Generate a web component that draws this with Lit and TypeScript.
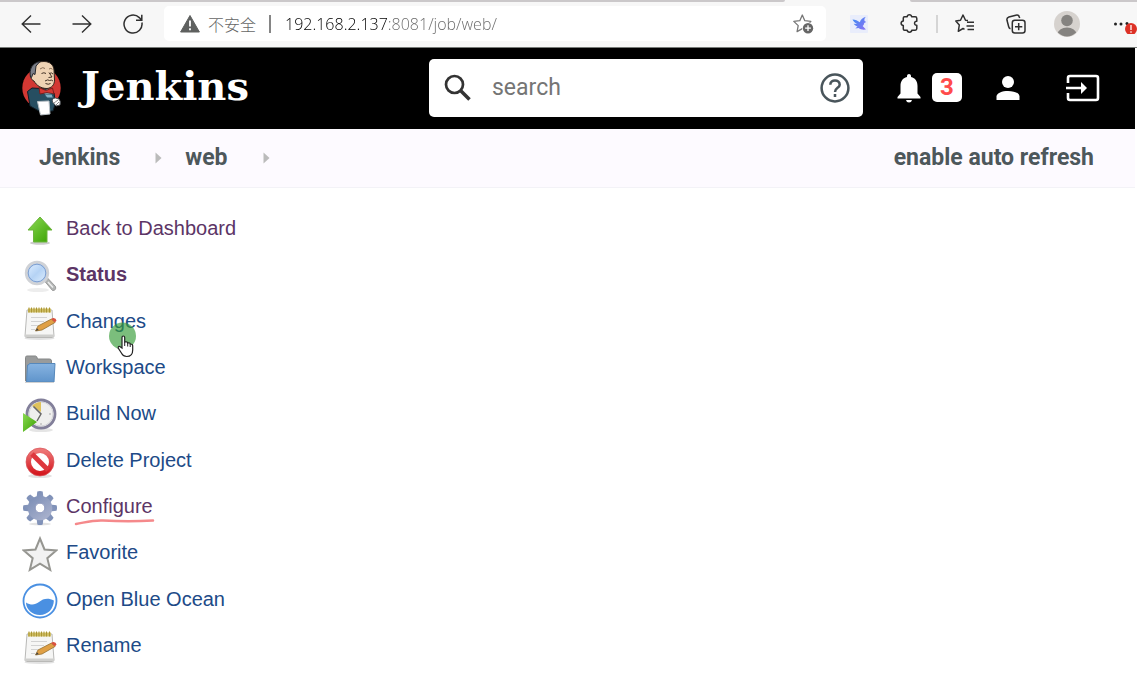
import { LitElement, html, svg, css } from "lit";
import { customElement, property } from "lit/decorators.js";
import { classMap } from "lit/directives/class-map.js";

const baseStyles = css`
  * { box-sizing: border-box; }
  svg { display: block; flex: none; }
  button { border: 0; padding: 0; margin: 0; background: none; color: inherit; font: inherit; cursor: pointer; }
  input { border: 0; padding: 0; margin: 0; outline: 0; min-width: 0; background: none; }
  a { text-decoration: none; }
`;

@customElement("browser-bar")
export class BrowserBar extends LitElement {
  static styles = [baseStyles, css`
    :host { display: block; background: #f7f7f7; border-bottom: 1px solid #777b78; }
    .tabs { display: flex; justify-content: space-between; height: 2px; }
    .tab { background: #cbc8ca; }
    .left { width: 69%; border-bottom-right-radius: 2px; }
    .right { width: 20%; border-bottom-left-radius: 2px; }
    .bar { display: flex; align-items: center; height: 45px; padding: 0 0 2px 5px; }
    .tool { display: flex; align-items: center; justify-content: center; flex: none; width: 51px; height: 34px; color: #303030; }
    .address { display: flex; align-items: center; flex: 1; height: 35px; margin: 0 7px 0 6px; padding: 0 12px 0 16px; border-radius: 5px; background: #fff; }
    .warn { font: 300 16px "Open Sans", "Noto Sans CJK SC", sans-serif; color: #666; margin-left: 8px; white-space: nowrap; }
    .rule { width: 2px; height: 18px; margin: 0 14px 0 13px; background: #858585; flex: none; }
    .url {
      flex: 1; height: 24px; font: 300 16px "Open Sans", sans-serif; color: transparent; caret-color: #222;
      background: linear-gradient(90deg, #000 103px, #666 103px);
      -webkit-background-clip: text; background-clip: text;
    }
    .sep { width: 2px; height: 18px; margin: 0 1px; background: #d5d5d5; flex: none; }
    .more { width: 45px; justify-content: flex-end; }
  `];
  render() {
    return html`
      <div class="tabs"><div class="tab left"></div><div class="tab right"></div></div>
      <div class="bar">
        <button class="tool" aria-label="Back"><svg width="20" height="20" viewBox="0 0 20 20" fill="none" stroke="currentColor" stroke-width="1.4"><path d="M19.5 10H1M10 1.5 1.2 10 10 18.5"/></svg></button>
        <button class="tool" aria-label="Forward"><svg width="20" height="20" viewBox="0 0 20 20" fill="none" stroke="currentColor" stroke-width="1.4"><path d="M.5 10H19M10 1.5 18.8 10 10 18.5"/></svg></button>
        <button class="tool" aria-label="Reload"><svg width="20" height="20" viewBox="0 0 20 20" fill="none" stroke="currentColor" stroke-width="1.5"><path d="M18.9 8.5A9 9 0 1 1 16.3 3.6L18.5 6M18.8.8V6.3H13"/></svg></button>
        <div class="address">
          <svg width="20" height="18" viewBox="0 0 20 18"><path d="M10 .5 19.4 17H.6Z" fill="#5e605f" stroke="#5e605f" stroke-linejoin="round"/><path d="M10 5.5v6M10 13.3v2" stroke="#fff" stroke-width="1.8"/></svg>
          <label class="warn" for="url">不安全</label>
          <span class="rule"></span>
          <input class="url" id="url" type="text" value="192.168.2.137:8081/job/web/">
          <button aria-label="Add to favorites"><svg width="21" height="20" viewBox="0 0 21 20"><path d="m9.3 1 2.5 5.7 6 .7-4.4 4 .9 6.2-5-3-5.2 3 1.1-6L.8 7.4l6-.7Z" fill="none" stroke="#777" stroke-width="1.3" stroke-linejoin="round"/><circle cx="15" cy="14.2" r="6" fill="#fff"/><circle cx="15" cy="14.2" r="5.2" fill="#666"/><path d="M15 11.3v5.8M12.1 14.2h5.8" stroke="#fff" stroke-width="1.3"/></svg></button>
        </div>
        <button class="tool" aria-label="Bird extension"><svg width="18" height="18" viewBox="0 0 18 18"><defs><linearGradient id="bird" x2="1" y2="1"><stop stop-color="#3a8df2"/><stop offset="1" stop-color="#8c72f5"/></linearGradient></defs><rect width="18" height="18" rx="1" fill="#e9edfb"/><path d="M2.500 4.500c2.700.3 5.300 1.100 7.300 2.700C10.500 4.700 12.300 2.800 15.800 1.800c-1.500 1.800-1.600 3-1.200 4.200l1.600.9-2 1.200c0 1.500-.8 2.300-1.600 3l3.400 3.400c-3.200.4-5.700-.1-7.400-1.600l-3.300.5 2.200-2C5.600 10.900 4.400 9.900 3.700 8.700l3.300.3C4.900 7.700 3.300 6.200 2.500 4.500Z" fill="url(#bird)"/></svg></button>
        <button class="tool" aria-label="Extensions"><svg width="19" height="19" viewBox="0 0 19 19" fill="none" stroke="currentColor" stroke-width="1.5" stroke-linejoin="round"><path d="M4.500 2.800H7.200C7.400.2 11.400.2 11.600 2.800H15.200Q16.800 2.800 16.800 4.400V7.200C13.800 6.900 13.800 11.500 16.800 11.200V14.600Q16.800 16.200 15.200 16.200H11.800C11.500 18.800 7.500 18.800 7.200 16.200H4.500Q3.300 16.200 3.300 15V11.600C.4 11.300.4 7.400 3.300 7.100V4Q3.300 2.800 4.500 2.800Z"/></svg></button>
        <span class="sep"></span>
        <button class="tool" aria-label="Favorites"><svg width="20" height="19" viewBox="0 0 20 19" fill="none" stroke="currentColor" stroke-width="1.5" stroke-linejoin="round"><path d="M13 6.500 10.500 6.300 8 1 5.500 6.300.8 7l3.500 4-1 6.300L8 14.500l1.500.9M12 8.300h7M11.500 12h7.500M12.500 15.500H19"/></svg></button>
        <button class="tool" aria-label="Collections"><svg width="20" height="20" viewBox="0 0 20 20" fill="none" stroke="currentColor" stroke-width="1.5"><rect x="6.300" y="6.300" width="12.700" height="12.700" rx="2.500"/><path d="M12.700 9v7.300M9 12.700h7.300M4.500 14.800C3.400 14.500 3 13.900 2.700 12.800L1 6.300C.6 4.500 1.200 3.500 2.900 3L9.800 1.200C11.600.7 12.800 1.200 13.300 3L13.700 4"/></svg></button>
        <button class="tool" aria-label="Profile"><svg width="26" height="26" viewBox="0 0 26 26"><defs><clipPath id="face"><circle cx="13" cy="13" r="12.500"/></clipPath></defs><circle cx="13" cy="13" r="13" fill="#d6d2ce"/><g fill="#858380" clip-path="url(#face)"><circle cx="13" cy="9.500" r="5.800"/><ellipse cx="13" cy="23.500" rx="9.500" ry="7"/></g></svg></button>
        <button class="tool more" aria-label="Settings and more, update required"><svg width="24" height="20" viewBox="0 0 24 20"><g fill="#222"><circle cx="2.500" cy="10" r="1.500"/><circle cx="8" cy="10" r="1.500"/><circle cx="14" cy="9.500" r="1.500"/></g><circle cx="18" cy="15" r="6" fill="#dd3126"/><path d="M18 11v5M18 17.200v1.600" stroke="#fff" stroke-width="1.300"/></svg></button>
      </div>`;
  }
}

@customElement("jenkins-header")
export class JenkinsHeader extends LitElement {
  static styles = [baseStyles, css`
    :host { display: flex; align-items: center; height: 81px; margin-right: 2px; padding: 0 35px 2px 22px; background: #000; color: #fff; font-family: Roboto, sans-serif; }
    .brand { display: flex; align-items: center; gap: 19px; margin-right: auto; color: #fff; }
    .name { padding-bottom: 4px; font: bold 40px/52px "DejaVu Serif", serif; }
    .search { display: flex; align-items: center; flex: 0 1 434px; height: 58px; padding: 0 13px 0 15px; border-radius: 5px; background: #fff; color: #333; }
    .search input { flex: 1; margin-left: 20px; font: 23px Roboto, sans-serif; color: #333; }
    .search input::placeholder { color: #757575; opacity: 1; }
    .help { color: #49555b; }
    .alerts { display: flex; align-items: center; gap: 11px; margin-left: 34px; }
    .count { width: 30px; height: 29px; border-radius: 5px; background: #fff; color: #ff4b4b; font-weight: bold; font-size: 24px; line-height: 29px; text-align: center; }
    .user { margin-left: 33px; color: #fff; }
    .logout { margin-left: 45px; color: #fff; }
  `];
  render() {
    return html`
      <a class="brand" href="#" aria-label="Jenkins home">
        <svg width="40" height="56" viewBox="0 0 40 56">
          <ellipse cx="19.500" cy="28" rx="19.200" ry="20" fill="#d33833"/>
          <path d="M10 28 5.500 31.500 8 46l9 5h14l2.500-8-1.500-10-5-4Z" fill="#264e61" stroke="#101d25"/>
          <path d="M9 14C9 5 15 1.500 22 1.500c6 0 9.500 3.500 10 8.500l.5 10c0 5-3 8-7.500 8.500-6 0-10.500-3-13-7.500-3-1-4-5-3-7Z" fill="#efd3b4" stroke="#30251e"/>
          <path d="M8.500 17C7 9 10 3 18 1.500L14 6l-1 8.500-2-1-1.500 4Z" fill="#7b7f88" stroke="#25272c"/>
          <path d="M18 9q3-2.500 5-.5M27 9q2-1.500 3.500.3" fill="none" stroke="#8c7158"/>
          <path d="M19.500 13.500q2.500-1.500 4.500 0M27.500 13.500q2-1.500 3.500.5M27 12.500l3 4.500-3.500.5M23 21q3-2 4.500-.5 2-1 3.500.5M23.500 23.500q3 1.500 5 0" fill="none" stroke="#443328"/>
          <path d="m20 31 6.500 7 5-7-4-2Z" fill="#dce5e9"/>
          <path d="m17 27.500 7 3 6.500-2.500 1.500 6-7-1.500-7 1.500Z" fill="#d33833" stroke="#7e1d1b"/>
          <path d="m22 34 8 0 1.500 4-6.500 0Z" fill="#81b0c4" stroke="#264e61"/>
          <path d="M15.500 41.500 27 41l1 13-9.500 1Z" fill="#fff" stroke="#b8c0c5"/>
          <path d="M30.500 42q-1-4 3-4l3.500 1q2 2 1 6l-4 1Z" fill="#fff" stroke="#4c5054"/><path d="m32 43 4-3M34 45l3-3" stroke="#8d8d8d"/>
        </svg>
        <span class="name">Jenkins</span>
      </a>
      <div class="search">
        <svg width="28" height="28" viewBox="0 0 28 28" fill="none" stroke="#333"><circle cx="10.500" cy="10.500" r="8.500" stroke-width="2.700"/><path d="m17 17 8.500 8.500" stroke-width="3.500"/></svg>
        <input type="search" placeholder="search" aria-label="Search">
        <button class="help" aria-label="Search help"><svg width="30" height="30" viewBox="0 0 32 32" fill="none" stroke="currentColor" stroke-width="2.700"><circle cx="16" cy="16" r="14.300"/><path d="M11 12.500C11 6.500 21 6.500 21 12.500 21 16 16 15.800 16 20.300M16 22.500v3"/></svg></button>
      </div>
      <button class="alerts" aria-label="3 notifications">
        <svg width="24" height="30" viewBox="0 0 24 30" fill="#fff"><path d="M10 4V3C10 .2 14 .2 14 3v1c4.500 1 6.500 4.500 6.500 9v7.500L23.500 24v1.500H.5V24l3-3.500V13C3.500 8.500 5.500 5 10 4ZM9 27h6q-.5 2.500-3 2.500T9 27Z"/></svg>
        <span class="count">3</span>
      </button>
      <a class="user" href="#" aria-label="User"><svg width="26" height="26" viewBox="0 0 26 26" fill="#fff"><circle cx="13" cy="7" r="6"/><path d="M1.500 25v-3.500C1.500 14 24.500 14 24.500 21.500V25Z"/></svg></a>
      <a class="logout" href="#" aria-label="Log out"><svg width="34" height="28" viewBox="0 0 34 28" fill="none" stroke="#fff" stroke-width="2.600"><path d="M2 9V4q0-2 2-2h26q2 0 2 2v20q0 2-2 2H4q-2 0-2-2v-5M0 14h17"/><path d="m15 8 6 6-6 6Z" fill="#fff" stroke="none"/></svg></a>`;
  }
}

@customElement("crumb-bar")
export class CrumbBar extends LitElement {
  static styles = [baseStyles, css`
    :host { display: flex; align-items: center; justify-content: space-between; height: 59px; margin-right: 2px; padding: 0 41px 0 39px; background: #fdfaff; border-bottom: 1px solid #f3f2f7; font: bold 23px/30px Roboto, sans-serif; }
    a { color: #4d575b; }
    nav { display: flex; align-items: center; }
    .arrow { margin: 0 23px 0 35px; }
  `];
  render() {
    const arrow = html`<svg class="arrow" width="7" height="12" viewBox="0 0 7 12"><path d="M.5.5 6.500 6 .5 11.500Z" fill="#bbb"/></svg>`;
    return html`<nav aria-label="Breadcrumb"><a href="#">Jenkins</a>${arrow}<a href="#">web</a>${arrow}</nav><a href="#">enable auto refresh</a>`;
  }
}

const notepad = svg`
  <ellipse cx="17.500" cy="33.500" rx="15" ry="1.500" fill="#e2e2e2"/>
  <path d="M5 5h25l2 26q0 1.500-1.500 1.500h-26Q3 32.500 3 31Z" fill="#f6f6f5" stroke="#b9b9b7"/>
  <path d="M3.500 29.500h28l.5 2.500H3Z" fill="#cfcfcd"/>
  <path d="M6 3.500h23v4H6Z" fill="#d0bf66"/><path d="M7 2.500v5M9.500 2.500v5M12 2.500v5M14.500 2.500v5M17 2.500v5M19.500 2.500v5M22 2.500v5M24.500 2.500v5M27.500 2.500v5" stroke="#ab9634"/>
  <path d="M9 12.500h16M9 16.500h13M9 20.500h7M9 24.500h4" stroke="#d2d2d2" stroke-width="1.200"/>
  <path d="m13.500 26 2.500-5L29.500 14l3.500 3.500-13 7.500Z" fill="#e0a045" stroke="#96702f" stroke-width=".8"/>
  <path d="m29 14 2-1q3-.3 3.500 2.500l-1.500 2Z" fill="#d9523e"/><path d="m13.500 26 1.500-2.800 1.700 1.800Z" fill="#444"/>`;

const gearTeeth = [0, 45, 90, 135, 180, 225, 270, 315].map(
  (turn) => svg`<path d="m14.500 8 .8-6.500q2.700-1 5.400 0L21.500 8Z" transform="rotate(${turn} 18 18)"/>`);

const icons = {
  up: svg`<ellipse cx="18" cy="31" rx="10" ry="1.800" fill="#ccc"/><path d="M18 5 30 18H25v12H11.500V18H6Z" fill="url(#green)" stroke="#6cb53c"/>`,
  lens: svg`<ellipse cx="16" cy="32" rx="11" ry="2" fill="#ededed"/><path d="m22.500 23 3-3 8 8.500q1 4-3 4Z" fill="#b2b5b4" stroke="#999"/><path d="m26 24 5 5.500" stroke="#eee" stroke-width="1.500"/><circle cx="15" cy="15" r="10.800" fill="#a9c9ee" stroke="#d0d2d6" stroke-width="2.800"/><circle cx="15" cy="15" r="8.800" fill="url(#glass)" stroke="#7f9fd0"/>`,
  note: notepad,
  folder: svg`<path d="M3.500 30V6.500q0-1.500 1.500-1.500h8.500q1.500 0 2 3h12q2 0 2 2v20Z" fill="#999b9b" stroke="#858787"/><path d="M5.500 14h1l1-1.500h25.500l-1 18.500H4.500Z" fill="url(#blue)" stroke="#5688bb"/><path d="M3 31.500h29" stroke="#d0d0d0"/>`,
  build: svg`<ellipse cx="19" cy="33" rx="12" ry="2" fill="#e5e5e5"/><circle cx="19" cy="17" r="14" fill="#efefee" stroke="#827f9a" stroke-width="2.800"/><circle cx="19" cy="17" r="12" fill="none" stroke="#d3d3d8"/><path d="m19 15-9-6q4-4 9-4Z" fill="#dfc25c"/><path d="m11.500 9.500 7.500 7.500-4 7" fill="none" stroke="#696969" stroke-width="1.500"/><path d="M29 17h-2M19 28v-2" stroke="#aaa"/><path d="M1 16 15 25 1 35Z" fill="url(#green)"/>`,
  stop: svg`<ellipse cx="18" cy="32" rx="12" ry="2" fill="#e2e2e2"/><circle cx="18" cy="18" r="11.500" fill="#fff" stroke="url(#red)" stroke-width="5"/><path d="m10 10 16 16" stroke="#de373e" stroke-width="5"/><circle cx="18" cy="18" r="14" fill="none" stroke="#d9545a" stroke-width=".7"/>`,
  gear: svg`<ellipse cx="18" cy="34" rx="11" ry="1.500" fill="#e2e2e2"/><g fill="url(#steel)">${gearTeeth}</g><circle cx="18" cy="18" r="8.500" fill="none" stroke="url(#steel)" stroke-width="7.500"/><circle cx="18" cy="18" r="4.800" fill="#fff" stroke="#8c97bd"/>`,
  star: svg`<path d="m18 2.500 4.500 11 11.800.9-9 7.800 2.900 11.600L18 27.700 7.800 33.800l2.900-11.600-9-7.800 11.800-.9Z" fill="#f2f2f2" stroke="#969691" stroke-width="2"/>`,
  ocean: svg`<circle cx="18" cy="18" r="16.500" fill="#fff" stroke="#4a90e2" stroke-width="1.800"/><path d="M4 19.500c5 3 9 2.500 13-.5 4-3.300 9-4.500 14.900-1.500C31.500 26 26 31.900 18 31.900S4 26 4 19.500Z" fill="#4a90e2"/>`,
};

@customElement("task-link")
export class TaskLink extends LitElement {
  @property() icon: keyof typeof icons = "up";
  @property() label = "";
  @property({ type: Boolean }) visited = false;
  @property({ type: Boolean }) current = false;
  @property({ type: Boolean }) marked = false;
  static styles = [baseStyles, css`
    :host { display: block; }
    .task { display: inline-flex; align-items: center; gap: 8px; height: 36px; color: #204a87; font: 20px/24px "Liberation Sans", Arial, sans-serif; }
    .visited { color: #5c3566; }
    .current { font-weight: bold; }
    .label { position: relative; padding-bottom: 4px; }
    .mark { position: absolute; left: 8px; top: 24px; }
  `];
  render() {
    return html`<a class=${classMap({ task: true, visited: this.visited, current: this.current })} href="#">
      <svg width="36" height="36" viewBox="0 0 36 36" aria-hidden="true">
        <defs>
          <linearGradient id="green" x2="1" y2="1"><stop stop-color="#8cda54"/><stop offset="1" stop-color="#38a000"/></linearGradient>
          <linearGradient id="blue" x2="0" y2="1"><stop stop-color="#88b4e1"/><stop offset="1" stop-color="#5f94cb"/></linearGradient>
          <linearGradient id="glass" x2="1" y2="1"><stop stop-color="#dcecff"/><stop offset=".5" stop-color="#b5d3f5"/><stop offset="1" stop-color="#dcecfc"/></linearGradient>
          <linearGradient id="red" x2="0" y2="1"><stop stop-color="#ed7676"/><stop offset="1" stop-color="#d51920"/></linearGradient>
          <linearGradient id="steel" gradientUnits="userSpaceOnUse" x1="5" y1="3" x2="29" y2="34"><stop stop-color="#7488b2"/><stop offset="1" stop-color="#b3b9d2"/></linearGradient>
        </defs>
        ${icons[this.icon]}
      </svg>
      <span class="label">${this.label}${this.marked
        ? html`<svg class="mark" width="82" height="8" viewBox="0 0 82 8" fill="none" stroke="#f5898b" stroke-width="2.500" stroke-linecap="round"><path d="M2 6C13 4 19 2 29 2.500c18 1 33 1 50 0"/></svg>`
        : ""}</span>
    </a>`;
  }
}

@customElement("app-root")
export class AppRoot extends LitElement {
  static styles = [baseStyles, css`
    :host { display: flex; flex-direction: column; min-height: 100vh; background: #fff; }
    .tasks { position: relative; display: flex; flex: 1; flex-direction: column; justify-content: space-between; padding: 24px 22px 36px; }
    .pointer { position: absolute; left: 108px; top: 134px; pointer-events: none; }
    .tasks { padding-bottom: 31px; }
  `];
  render() {
    return html`
      <browser-bar></browser-bar>
      <jenkins-header></jenkins-header>
      <crumb-bar></crumb-bar>
      <nav class="tasks" aria-label="Project">
        <task-link icon="up" label="Back to Dashboard" visited></task-link>
        <task-link icon="lens" label="Status" visited current></task-link>
        <task-link icon="note" label="Changes"></task-link>
        <task-link icon="folder" label="Workspace"></task-link>
        <task-link icon="build" label="Build Now"></task-link>
        <task-link icon="stop" label="Delete Project"></task-link>
        <task-link icon="gear" label="Configure" visited marked></task-link>
        <task-link icon="star" label="Favorite"></task-link>
        <task-link icon="ocean" label="Open Blue Ocean"></task-link>
        <task-link icon="note" label="Rename"></task-link>
        <svg class="pointer" width="28" height="36" viewBox="0 0 28 36" aria-hidden="true">
          <circle cx="14.500" cy="14" r="13.500" fill="#349b36" opacity=".65"/>
          <path d="M14 26V15.500Q14 14 15.300 14t1.400 1.500V20q3-.5 3 1 2.500-.5 2.500 1 2.500 0 2.500 1.800V28c0 4-2 6.500-6 6.500-3 0-4-1-5-3l-3.500-5.500q0-2.200 2-1.300Z" fill="#fff" stroke="#222" stroke-width="1.200"/><path d="M16.700 20v4M19.700 21v3.500M22.200 22v3" stroke="#222"/>
        </svg>
      </nav>`;
  }
}
